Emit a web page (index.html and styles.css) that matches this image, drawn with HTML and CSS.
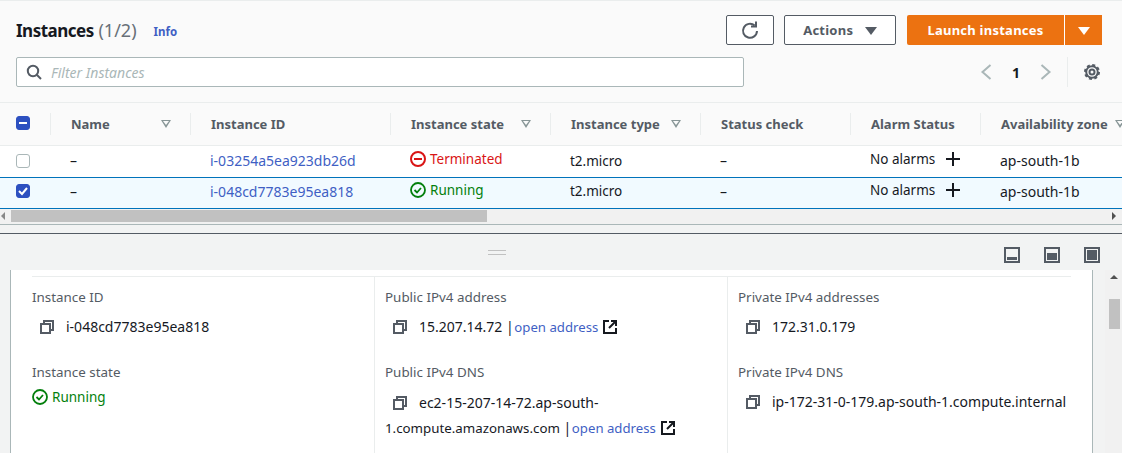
FILE: index.html
```html
<!DOCTYPE html>
<html lang="en">
<head>
<meta charset="UTF-8">
<title>Instances</title>
<link rel="stylesheet" href="styles.css">
</head>
<body>
<div class="top">
	<div class="bar">
		<h1 class="title"><span class="title-main">Instances</span> <span class="count">(1/2)</span></h1>
		<a class="info">Info</a>
		<div class="actions">
			<button class="btn btn-icon">
				<svg width="20" height="20" viewBox="0 0 20 20" fill="none" stroke="#545b64" stroke-width="2"><path d="M17 11a7 7 0 1 1-2.3-5.4"/><path d="M16 1.5v5h-5"/></svg>
			</button>
			<button class="btn btn-actions">Actions <i class="caret"></i></button>
			<div class="launch">
				<button class="launch-main">Launch instances</button>
				<button class="launch-drop"><i class="caret caret-white"></i></button>
			</div>
		</div>
	</div>
	<div class="bar2">
		<div class="filter">
			<svg width="16" height="16" viewBox="0 0 16 16" fill="none" stroke="#545b64" stroke-width="2"><circle cx="7" cy="7" r="5.2"/><path d="M11 11l4 4"/></svg>
			<span>Filter Instances</span>
		</div>
		<div class="pager">
			<svg width="12" height="16" viewBox="0 0 12 16" fill="none" stroke="#aab7b8" stroke-width="2"><path d="M10.5 1l-8 7 8 7"/></svg>
			<b>1</b>
			<svg width="12" height="16" viewBox="0 0 12 16" fill="none" stroke="#aab7b8" stroke-width="2"><path d="M1.5 1l8 7-8 7"/></svg>
		</div>
		<div class="prefs">
			<svg width="18" height="18" viewBox="0 0 18 18" fill="none" stroke="#545b64"><circle cx="9" cy="9" r="2.5" stroke-width="2"/><circle cx="9" cy="9" r="5.8" stroke-width="2"/><circle cx="9" cy="9" r="7" stroke-width="2" stroke-dasharray="3 2.5"/></svg>
		</div>
	</div>
</div>

<div class="table">
	<div class="row head">
		<div class="cell"><span class="check check-on"><i class="dash"></i></span></div>
		<div class="cell">Name<i class="sort"></i></div>
		<div class="cell">Instance ID</div>
		<div class="cell">Instance state<i class="sort"></i></div>
		<div class="cell">Instance type<i class="sort"></i></div>
		<div class="cell">Status check</div>
		<div class="cell">Alarm Status</div>
		<div class="cell cell-last">Availability zone<i class="sort"></i></div>
	</div>
	<div class="row">
		<div class="cell"><span class="check"></span></div>
		<div class="cell">–</div>
		<div class="cell"><a>i-03254a5ea923db26d</a></div>
		<div class="cell state red">
			<svg width="16" height="16" viewBox="0 0 16 16" fill="none" stroke="#d91515" stroke-width="2"><circle cx="8" cy="8" r="7"/><path d="M4 8h8"/></svg>
			Terminated
		</div>
		<div class="cell cell-type">t2.micro</div>
		<div class="cell">–</div>
		<div class="cell alarm">No alarms <svg width="14" height="14" viewBox="0 0 14 14" stroke="#16191f" stroke-width="2"><path d="M7 0v14M0 7h14"/></svg></div>
		<div class="cell cell-last">ap-south-1b</div>
	</div>
	<div class="row selected">
		<div class="cell"><span class="check check-on"><svg width="12" height="12" viewBox="0 0 12 12" fill="none" stroke="#fff" stroke-width="2"><path d="M2 6l3 3 5-6"/></svg></span></div>
		<div class="cell">–</div>
		<div class="cell"><a>i-048cd7783e95ea818</a></div>
		<div class="cell state green">
			<svg width="16" height="16" viewBox="0 0 16 16" fill="none" stroke="#037f0c" stroke-width="1.8"><circle cx="8" cy="8" r="7"/><path d="M4.5 8l2.5 2.5 4-4.5"/></svg>
			Running
		</div>
		<div class="cell cell-type">t2.micro</div>
		<div class="cell">–</div>
		<div class="cell alarm">No alarms <svg width="14" height="14" viewBox="0 0 14 14" stroke="#16191f" stroke-width="2"><path d="M7 0v14M0 7h14"/></svg></div>
		<div class="cell cell-last">ap-south-1b</div>
	</div>
	<div class="hscroll">
		<i class="arrow arrow-left"></i>
		<div class="hthumb"></div>
		<i class="arrow arrow-right"></i>
	</div>
</div>

<div class="split">
	<div class="grip"></div>
	<div class="views">
		<svg width="16" height="16" viewBox="0 0 16 16"><rect x="1" y="1" width="14" height="14" fill="none" stroke="#545b64" stroke-width="2"/><rect x="3" y="10" width="10" height="3" fill="#545b64"/></svg>
		<svg width="16" height="16" viewBox="0 0 16 16"><rect x="1" y="1" width="14" height="14" fill="none" stroke="#545b64" stroke-width="2"/><rect x="3" y="6" width="10" height="7" fill="#545b64"/></svg>
		<svg width="16" height="16" viewBox="0 0 16 16"><rect x="1" y="1" width="14" height="14" fill="none" stroke="#545b64" stroke-width="2"/><rect x="3" y="3" width="10" height="10" fill="#545b64"/></svg>
	</div>
</div>

<div class="lower">
	<div class="panel">
		<div class="details">
			<div class="col">
				<div class="label">Instance ID</div>
				<div class="value"><svg class="copy" width="14" height="14" viewBox="0 0 14 14" fill="none" stroke="#545b64" stroke-width="2"><path d="M4 3V1h9v9h-3"/><rect x="1" y="4" width="9" height="9"/></svg>i-048cd7783e95ea818</div>
				<div class="label">Instance state</div>
				<div class="value value-state"><svg width="16" height="16" viewBox="0 0 16 16" fill="none" stroke="#037f0c" stroke-width="1.8"><circle cx="8" cy="8" r="7"/><path d="M4.5 8l2.5 2.5 4-4.5"/></svg>Running</div>
			</div>
			<div class="col">
				<div class="label">Public IPv4 address</div>
				<div class="value"><svg class="copy" width="14" height="14" viewBox="0 0 14 14" fill="none" stroke="#545b64" stroke-width="2"><path d="M4 3V1h9v9h-3"/><rect x="1" y="4" width="9" height="9"/></svg>15.207.14.72 | <a>open address</a><svg class="ext" width="14" height="14" viewBox="0 0 14 14" fill="none" stroke="#16191f" stroke-width="2"><path d="M6 1H1v12h12V8"/><path d="M8 1h5v5M13 1L6 8"/></svg></div>
				<div class="label">Public IPv4 DNS</div>
				<div class="value value-wrap"><svg class="copy" width="14" height="14" viewBox="0 0 14 14" fill="none" stroke="#545b64" stroke-width="2"><path d="M4 3V1h9v9h-3"/><rect x="1" y="4" width="9" height="9"/></svg>ec2-15-207-14-72.ap-south-<br><span class="host">1.compute.amazonaws.com</span> | <a>open address</a><svg class="ext" width="14" height="14" viewBox="0 0 14 14" fill="none" stroke="#16191f" stroke-width="2"><path d="M6 1H1v12h12V8"/><path d="M8 1h5v5M13 1L6 8"/></svg></div>
			</div>
			<div class="col">
				<div class="label">Private IPv4 addresses</div>
				<div class="value"><svg class="copy" width="14" height="14" viewBox="0 0 14 14" fill="none" stroke="#545b64" stroke-width="2"><path d="M4 3V1h9v9h-3"/><rect x="1" y="4" width="9" height="9"/></svg>172.31.0.179</div>
				<div class="label">Private IPv4 DNS</div>
				<div class="value"><svg class="copy" width="14" height="14" viewBox="0 0 14 14" fill="none" stroke="#545b64" stroke-width="2"><path d="M4 3V1h9v9h-3"/><rect x="1" y="4" width="9" height="9"/></svg>ip-172-31-0-179.ap-south-1.compute.internal</div>
			</div>
		</div>
	</div>
	<div class="vscroll">
		<i class="arrow arrow-up"></i>
		<div class="vthumb"></div>
	</div>
</div>
</body>
</html>
```

FILE: styles.css
```css
html,body{
	margin: 0;
	padding: 0;
}
body{
	width: 1122px;
	height: 453px;
	overflow: hidden;
	background: #f2f3f3;
	font-family: "Noto Sans", sans-serif;
	font-size: 14px;
	color: #16191f;
}
a{
	color: #3f5fc4;
}
button{
	font-family: inherit;
}

.top{
	height: 103px;
	background: #fafafa;
	border-top: 1px solid #eaeded;
	border-bottom: 1px solid #eaeded;
	box-sizing: border-box;
	padding: 14px 20px 0 16px;
}
.bar{
	display: flex;
	align-items: center;
	height: 30px;
}
.title{
	margin: 0;
	font-size: 18px;
	font-weight: 400;
	line-height: 30px;
}
.title-main{
	font-size: 17px;
	font-weight: 700;
	letter-spacing: -.5px;
}
.count{
	color: #687078;
}
.info{
	margin: 2px 0 0 17px;
	font-size: 11.5px;
	font-weight: 700;
}
.actions{
	margin-left: auto;
	display: flex;
	gap: 11px;
}
.btn{
	height: 30px;
	box-sizing: border-box;
	background: #fff;
	border: 1px solid #545b64;
	border-radius: 2px;
	color: #545b64;
	font-size: 13px;
	font-weight: 700;
	letter-spacing: .25px;
	padding: 0;
}
.btn-icon{
	width: 48px;
	margin-right: -1px;
	display: flex;
	align-items: center;
	justify-content: center;
}
.btn-actions{
	width: 112px;
}
.caret{
	display: inline-block;
	width: 0;
	height: 0;
	margin-left: 8px;
	border-left: 6px solid transparent;
	border-right: 6px solid transparent;
	border-top: 8px solid #545b64;
}
.caret-white{
	margin: 0;
	border-top-color: #fff;
}
.launch{
	display: flex;
}
.launch-main,.launch-drop{
	height: 30px;
	border: 0;
	background: #ec7211;
	color: #fff;
	font-size: 13px;
	font-weight: 700;
	letter-spacing: .25px;
	padding: 0;
}
.launch-main{
	width: 158px;
	border-radius: 2px 0 0 2px;
	border-right: 1px solid #fff;
}
.launch-drop{
	width: 37px;
}

.bar2{
	display: flex;
	align-items: center;
	margin-top: 12px;
	height: 30px;
}
.filter{
	width: 728px;
	height: 30px;
	box-sizing: border-box;
	background: #fff;
	border: 1px solid #aab7b8;
	border-radius: 2px;
	display: flex;
	align-items: center;
	gap: 9px;
	padding-left: 9px;
	font-style: italic;
	color: #aab7b8;
	font-size: 14px;
}
.pager{
	margin-left: auto;
	display: flex;
	align-items: center;
	gap: 20px;
	padding-right: 15px;
}
.prefs{
	border-left: 1px solid #eaeded;
	height: 30px;
	padding-left: 15px;
	margin-right: 1px;
	display: flex;
	align-items: center;
}

.table{
	overflow: hidden;
	border-bottom: 1px solid #aab7b8;
}
.row{
	display: grid;
	grid-template-columns: 50px 140px 200px 160px 150px 150px 130px 260px;
	width: 1240px;
	height: 31px;
	align-items: center;
	background: #fff;
	box-sizing: border-box;
}
.head{
	height: 43px;
	background: #fafafa;
	border-bottom: 1px solid #eaeded;
}
.selected{
	height: 32px;
	background: #f1faff;
	border-top: 1px solid #0073bb;
	border-bottom: 1px solid #0073bb;
}
.cell{
	padding: 0 0 2px 20px;
	display: flex;
	align-items: center;
	box-sizing: border-box;
	white-space: nowrap;
}
.selected .cell{
	padding-bottom: 4px;
}
.cell-type{
	font-size: 13.5px;
}
.head .cell{
	height: 22px;
	padding: 0 0 0 20px;
	border-left: 1px solid #eaeded;
	font-weight: 700;
	font-size: 13px;
	color: #545b64;
}
.row .cell:first-child{
	padding-left: 16px;
	border-left: 0;
}
.sort{
	margin-left: auto;
	margin-right: 19px;
	width: 0;
	height: 0;
	position: relative;
	border-left: 5px solid transparent;
	border-right: 5px solid transparent;
	border-top: 8px solid #879596;
}
.sort::after{
	content: "";
	position: absolute;
	left: -3px;
	top: -7px;
	border-left: 3px solid transparent;
	border-right: 3px solid transparent;
	border-top: 4px solid #fafafa;
}
.cell-last .sort{
	margin-left: 7px;
}
.check{
	width: 12px;
	height: 12px;
	display: flex;
	align-items: center;
	justify-content: center;
	border-radius: 3px;
	background: #fff;
	border: 1px solid #aab7b8;
}
.check-on{
	background: #2d50c0;
	border-color: #2d50c0;
}
.head .check{
	margin-top: -2px;
}
.dash{
	width: 8px;
	height: 2px;
	background: #fff;
}
.state{
	gap: 4px;
	margin-top: -3px;
	font-size: 13.5px;
}
.red{
	color: #d91515;
}
.green,.value-state{
	color: #037f0c;
}
.alarm{
	gap: 11px;
	margin-top: -3px;
	font-size: 13.5px;
}

.hscroll{
	display: flex;
	align-items: center;
	height: 15px;
	background: #f1f1f1;
	position: relative;
}
.hthumb{
	position: absolute;
	left: 11px;
	top: 1px;
	width: 476px;
	height: 12px;
	background: #c1c1c1;
}
.arrow{
	width: 0;
	height: 0;
	border: 4px solid transparent;
}
.arrow-left{
	border-left: 0;
	border-right-color: #888;
	margin: -2px 0 0 1px;
}
.arrow-right{
	border-right: 0;
	border-left-color: #505050;
	margin: -2px 6px 0 auto;
}

.split{
	height: 36px;
	margin-top: 8px;
	border-top: 1px solid #545b64;
	display: flex;
	align-items: center;
	justify-content: flex-end;
	position: relative;
}
.grip{
	position: absolute;
	left: 488px;
	top: 16px;
	width: 18px;
	height: 3px;
	border-top: 1px solid #c1c1c1;
	border-bottom: 1px solid #c1c1c1;
}
.views{
	display: flex;
	gap: 24px;
	padding-right: 22px;
	margin-top: 6px;
}

.lower{
	display: flex;
	height: 183px;
	padding-left: 10px;
}
.panel{
	width: 1083px;
	box-sizing: border-box;
	background: #fff;
	border-left: 1px solid #aab7b8;
	border-right: 1px solid #aab7b8;
	padding: 6px 21px 0 21px;
}
.details{
	display: grid;
	grid-template-columns: 342px 353px 1fr;
	height: 100%;
	border-top: 1px solid #eaeded;
}
.col{
	padding-top: 10px;
	border-left: 1px solid #eaeded;
	padding-left: 10px;
}
.col:first-child{
	border-left: 0;
	padding-left: 0;
}
.label{
	color: #545b64;
	font-size: 13.4px;
	line-height: 20px;
}
.value{
	line-height: 30px;
	margin: 5px 0 20px;
	white-space: nowrap;
}
.value a{
	font-size: 13.2px;
	margin-left: -3px;
}
.value-state{
	margin-top: 0;
	display: flex;
	align-items: center;
	gap: 4px;
	font-size: 13.5px;
}
.value-wrap{
	line-height: 25px;
	margin-top: 8px;
}
.host{
	font-size: 13.3px;
}
.copy{
	margin: 0 12px 0 8px;
	vertical-align: -2px;
}
.ext{
	margin-left: 5px;
	vertical-align: -2px;
}
.vscroll{
	width: 17px;
	margin-left: 12px;
	background: #f1f1f1;
	position: relative;
	display: flex;
	justify-content: center;
	padding-top: 5px;
	box-sizing: border-box;
}
.arrow-up{
	border-top: 0;
	border-bottom-color: #505050;
}
.vthumb{
	position: absolute;
	left: 4px;
	top: 29px;
	width: 11px;
	height: 30px;
	background: #c1c1c1;
}
```
